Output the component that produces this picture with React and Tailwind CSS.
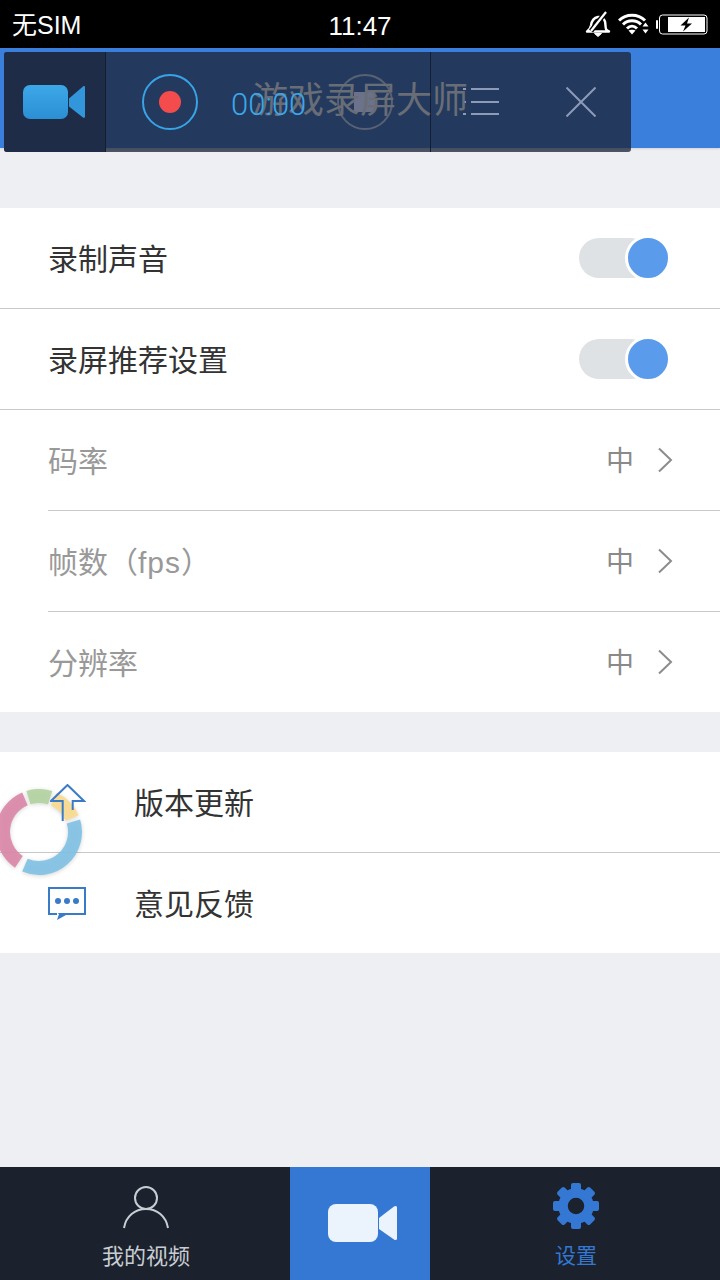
import React from "react";

const FONT = "font-['Liberation_Sans','Noto_Sans_CJK_SC',sans-serif]";

function arc(r, a0, a1) {
  const p = (a) => {
    const t = (a * Math.PI) / 180;
    return [39 + r * Math.sin(t), 43 - r * Math.cos(t)];
  };
  const [x0, y0] = p(a0);
  const [x1, y1] = p(a1);
  return `M${x0} ${y0}A${r} ${r} 0 ${a1 - a0 > 180 ? 1 : 0} 1 ${x1} ${y1}`;
}

function Toggle() {
  return (
    <div className="relative w-[90px] h-[42px] mr-[3px] flex items-center">
      <div className="w-[72px] h-[40px] rounded-full bg-[#dfe2e5]" />
      <div className="absolute right-0 top-0 w-[46px] h-[46px] -mt-[2px] -mr-[2px] rounded-full bg-[#5a9bec] border-[3px] border-white" />
    </div>
  );
}

function Chevron() {
  return (
    <svg width="16" height="26" viewBox="0 0 16 26" fill="none" className="ml-[23px] -mr-px -mt-[1px]">
      <path d="M2 1.500 14 13 2 24.500" stroke="#8c8c8c" strokeWidth="2" />
    </svg>
  );
}

function ToggleRow({ label }) {
  return (
    <div className="h-[101px] pl-12 pr-12 flex items-center justify-between border-b border-[#c8c8ca]">
      <span className="mt-[4px] text-[30px] leading-none text-[#333]">{label}</span>
      <Toggle />
    </div>
  );
}

function ValueRow({ label, border = true }) {
  return (
    <div className={`${border ? "h-[101px]" : "h-[100px]"} pl-12`}>
      <div className={`h-full pr-12 flex items-center justify-between ${border ? "border-b border-[#c8c8ca]" : ""}`}>
        <span className="mt-[4px] text-[30px] leading-none text-[#999]">{label}</span>
        <span className="flex items-center">
          <span className="mt-[4px] text-[28px] leading-none text-[#8a8a8a]">中</span>
          <Chevron />
        </span>
      </div>
    </div>
  );
}

function Gear() {
  const angles = [0, 45, 90, 135, 180, 225, 270, 315];
  return (
    <svg width="48" height="48" viewBox="0 0 48 48">
      <circle cx="24" cy="24" r="13" fill="none" stroke="#3478d4" strokeWidth="9.5" />
      {angles.map((a) => (
        <rect key={a} x="19" y="1" width="10" height="12" rx="2" fill="#3478d4" transform={`rotate(${a} 24 24)`} />
      ))}
    </svg>
  );
}

export default function App() {
  return (
    <div className={`w-[720px] h-[1280px] flex flex-col overflow-hidden bg-[#edeff3] ${FONT}`}>
      {/* status bar */}
      <div className="relative h-12 bg-black text-white flex items-center justify-between pl-3 pr-3 pt-[3px]">
        <span className="text-[25px] leading-none">无SIM</span>
        <span className="absolute left-0 right-0 text-center text-[26px] leading-none">11:47</span>
        <div className="flex items-center -mt-[3px]">
          <svg width="26" height="26" viewBox="0 0 26 26" fill="none" className="mr-[7px]">
            <path d="M2 20.500c2.500-1.500 3.500-3 4-6 .6-4.500 2-7.500 7-8.500 3-.5 6 1.500 7 4.500.6 3 .5 6.500 1 7.500.5 1.200 1.500 2 3 2.500H2Z" stroke="#fff" strokeWidth="2.400" strokeLinejoin="round" />
            <path d="M9.500 22.500h7l-3.500 3Z" fill="#fff" stroke="#fff" />
            <path d="M21 1 6 20" stroke="#000" strokeWidth="5" />
            <path d="M21 1 6 20" stroke="#fff" strokeWidth="2.200" />
          </svg>
          <svg width="32" height="22" viewBox="0 0 32 22" fill="none" className="mr-[6px]">
            <path d="M1 7.500C8 .5 20 .5 27 7.500" stroke="#fff" strokeWidth="3" />
            <path d="M5 11.500c5-5 13-5 18 0" stroke="#fff" strokeWidth="3" />
            <path d="M9 15.500c3-3 7-3 10 0" stroke="#fff" strokeWidth="3" />
            <path d="M10.500 17.500c1.500-1 5.500-1 7 0l-3.500 4Z" fill="#fff" />
            <path d="M27.500 9.500l3 4h-6Zm0 11l3-4h-6Z" fill="#fff" />
          </svg>
          <svg width="52" height="21" viewBox="0 0 52 21">
            <rect x="0" y="6" width="2" height="9" rx="1" fill="#fff" />
            <rect x="3.500" y="1" width="47.500" height="19" rx="3" fill="none" stroke="#fff" strokeWidth="1" />
            <rect x="12" y="3" width="37" height="15" fill="#fff" />
            <path d="M33 3.500 24.500 11.500h5L27 17.500 36 9.500h-5Z" fill="#000" />
          </svg>
        </div>
      </div>

      {/* header */}
      <div className="relative h-[100px] bg-[#3a7fdb] flex items-center justify-center shadow-[0_1px_2px_rgba(0,0,0,0.12)]">
        <div className="absolute left-1 top-1 w-[627px] h-[100px] rounded-[3px] overflow-hidden flex bg-[#1e273b]/78">
          <div className="w-[102px] shrink-0 bg-[#1f2c47] border-r border-[#151d30] flex items-center pl-[19px]">
            <svg width="62" height="34" viewBox="0 0 62 34">
              <defs>
                <linearGradient id="cam" x1="0" y1="0" x2="0" y2="1">
                  <stop offset="0" stopColor="#3ca8e8" />
                  <stop offset="1" stopColor="#2b8fd4" />
                </linearGradient>
              </defs>
              <rect x="0" y="0" width="45" height="34" rx="7" fill="url(#cam)" />
              <path d="M46 13.500 60 1.500c1-.8 2-.3 2 1v29c0 1.300-1 1.800-2 1L46 21.500Z" fill="#3197da" />
            </svg>
          </div>
          <div className="w-[325px] shrink-0 border-r border-[#151d30] flex items-center pl-[36px]">
            <svg width="56" height="56" viewBox="0 0 56 56">
              <circle cx="28" cy="28" r="27" fill="none" stroke="#38a3e6" strokeWidth="2" />
              <circle cx="28" cy="28" r="11" fill="#f44c4c" />
            </svg>
            <span className="relative z-10 w-[73px] ml-[33px] mt-[4px] text-[31px] leading-none text-[#3aa8ea] whitespace-nowrap font-['Roboto',sans-serif] font-light">00:00</span>
            <svg width="56" height="56" viewBox="0 0 56 56" className="ml-[33px]">
              <circle cx="28" cy="28" r="27" fill="none" stroke="#596273" strokeWidth="2" />
              <rect x="17" y="18" width="21" height="20" fill="#6b7289" />
            </svg>
          </div>
          <div className="flex items-center pl-[32px]">
            <svg width="36" height="28" viewBox="0 0 36 28">
              <path d="M0 1h3M8 1h28M0 14h3M8 14h28M0 26h3M8 26h28" stroke="#8d9ab8" strokeWidth="2" />
            </svg>
            <svg width="30" height="30" viewBox="0 0 30 30" fill="none" className="ml-[67px]">
              <path d="M.5.5 29.500 29.500M29.500.5.5 29.500" stroke="#8d9ab8" strokeWidth="2" />
            </svg>
          </div>
        </div>
        <span className="relative mt-[6px] text-[36px] leading-none text-[#696d76] whitespace-nowrap">游戏录屏大师</span>
      </div>

      {/* group 1 */}
      <div className="mt-[60px] bg-white">
        <ToggleRow label="录制声音" />
        <ToggleRow label="录屏推荐设置" />
        <ValueRow label="码率" />
        <ValueRow label={<>帧数（<span className="tracking-[1px]">fps</span>）</>} />
        <ValueRow label="分辨率" border={false} />
      </div>

      {/* group 2 */}
      <div className="relative mt-[40px] bg-white">
        <div className="h-[101px] border-b border-[#c8c8ca] flex items-center pl-[134px]">
          <span className="mt-[4px] text-[30px] leading-none text-[#333]">版本更新</span>
        </div>
        <div className="h-[100px] flex items-center pl-[48px]">
          <svg width="38" height="34" viewBox="0 0 38 34" fill="none" className="mr-[48px] mt-px">
            <path d="M9 27H1V1h36v26H18" stroke="#3a7bc8" strokeWidth="2" />
            <path d="M9.500 26h8.500v2l-9 5 2-6Z" fill="#3a7bc8" />
            <circle cx="10" cy="14" r="3" fill="#3a7bc8" />
            <circle cx="19" cy="14" r="3" fill="#3a7bc8" />
            <circle cx="28" cy="14" r="3" fill="#3a7bc8" />
          </svg>
          <span className="mt-[4px] text-[30px] leading-none text-[#333]">意见反馈</span>
        </div>

        {/* floating ball */}
        <svg width="88" height="96" viewBox="0 0 88 96" fill="none" className="absolute left-0 top-[37px] drop-shadow-[0_1px_2px_rgba(0,0,0,0.18)]">
          <g strokeWidth="14" strokeOpacity="0.9">
            <path d={arc(36, 73, 203)} stroke="#7fc1e6" />
            <path d={arc(36, 214, 337)} stroke="#dc86a6" />
            <path d={arc(36, 343, 378)} stroke="#b3d3a0" />
            <path d={arc(36, 24, 67)} stroke="#fbdc8e" />
          </g>
        </svg>
        <svg width="36" height="38" viewBox="0 0 36 38" fill="none" className="absolute left-[50px] top-[32px]">
          <path d="M12.700 37V17H1L17.500 1 34 17H22.700v9" stroke="#3a7bc8" strokeWidth="2" />
        </svg>
      </div>

      <div className="flex-1" />

      {/* bottom nav */}
      <div className="h-[113px] bg-[#1b222d] flex">
        <div className="w-[290px] flex flex-col items-center pt-[19px] pl-[2px]">
          <svg width="46" height="43" viewBox="0 0 46 43" fill="none">
            <circle cx="23" cy="12" r="11" stroke="#c9cdd3" strokeWidth="2" />
            <path d="M1 42C3 30 12 23 23 23s20 7 22 19" stroke="#c9cdd3" strokeWidth="2" />
          </svg>
          <span className="mt-[17px] text-[22px] leading-none text-[#c9cdd3]">我的视频</span>
        </div>
        <div className="w-[140px] bg-[#3478d4] flex items-center justify-center pb-[2px] pl-[6px]">
          <svg width="70" height="38" viewBox="0 0 70 38">
            <rect x="0" y="0" width="50" height="38" rx="8" fill="#ebf3fd" />
            <path d="M51 14 66 2.500c1.500-1 3-.5 3 1v31c0 1.500-1.500 2-3 1L51 25Z" fill="#ebf3fd" />
          </svg>
        </div>
        <div className="w-[290px] flex flex-col items-center pt-[15px] pl-[2px]">
          <Gear />
          <span className="mt-[15px] text-[21px] leading-none text-[#3478d4]">设置</span>
        </div>
      </div>
    </div>
  );
}
